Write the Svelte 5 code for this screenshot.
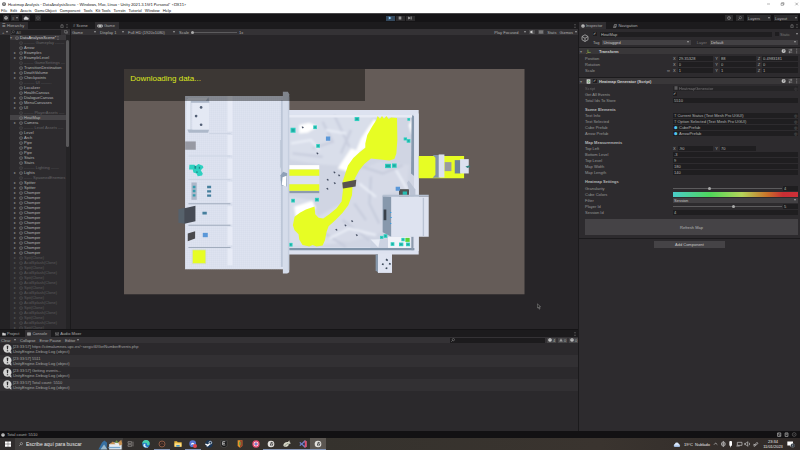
<script>
  const menus = ['File', 'Edit', 'Assets', 'GameObject', 'Component', 'Tools', 'Kit Tools', 'Terrain', 'Tutorial', 'Window', 'Help'];

  const row = (name, fold = false, dim = false) => ({ name, fold, dim });
  const sep = (name) => ({ name, fold: false, dim: true, sep: true });
  const nodes = [
    sep('-------- Gameplay -------'),
    row('Arrow'), row('Examples', true), row('ExampleLevel', true),
    sep('------- GameSettings ---'),
    row('TransitionDestination'), row('DeathVolume', true), row('Checkpoints', true),
    sep('-------- UI --------'),
    row('Localizer'), row('HealthCanvas'), row('DialogueCanvas', true), row('MenuCanvases', true), row('UI', true),
    sep('------- PlayerAssets ----'),
    row('HeatMap'), row('Camera', true),
    sep('------- Level Assets ----'),
    row('Level'), row('Arch'), row('Pipe'), row('Pipe'), row('Pipe'), row('Stairs'), row('Stairs'),
    sep('-------- Lighting ------'),
    row('Lights', true),
    sep('------ SpawnedEnemies'),
    row('Spitter', true), row('Spitter', true),
    ...Array.from({ length: 13 }, () => row('Chomper', true)),
    ...Array.from({ length: 15 }, (_, i) => row(i % 2 ? 'AcidSplash(Clone)' : 'Spit(Clone)', true, true))
  ];

  const transform = [
    { label: 'Position', v: ['29.35328', '88', '0.4983181'] },
    { label: 'Rotation', v: ['0', '0', '0'] },
    { label: 'Scale', v: ['1', '1', '1'] }
  ];
  const axes = ['X', 'Y', 'Z'];
  const refs = [
    { label: 'Text Info', value: 'Current Status (Text Mesh Pro UGUI)', prefab: false },
    { label: 'Text Selected', value: 'Option Selected (Text Mesh Pro UGUI)', prefab: false },
    { label: 'Cube Prefab', value: 'CubePrefab', prefab: true },
    { label: 'Arrow Prefab', value: 'ArrowPrefab', prefab: true }
  ];
  const measures = [
    { label: 'Bottom Level', value: '-3' },
    { label: 'Top Level', value: '9' },
    { label: 'Map Width', value: '180' },
    { label: 'Map Length', value: '140' }
  ];
  const logs = ['https://citmalumnes.upc.es/~sergicf4/GetNumberEvents.php', '5511', 'Getting events...', 'Total count: 5510'];

  const teal = [[34, 113, 15, 15], [102, 106, 11, 11], [226, 81, 14, 12], [111, 162, 11, 11], [384, 84, 8, 8], [373, 142, 10, 9], [382, 147, 11, 11], [317, 221, 18, 13], [338, 220, 14, 13], [36, 326, 11, 11], [107, 323, 12, 11], [29, 458, 11, 11], [302, 437, 10, 9], [313, 432, 11, 11], [334, 456, 11, 11], [359, 457, 13, 11], [380, 457, 12, 11], [366, 443, 10, 10]];
  const dots = [[70, 112], [114, 190], [165, 247], [179, 256], [145, 269], [166, 279], [144, 296], [218, 393], [198, 406], [171, 419], [232, 435]];
  const sideDots = [[246, 142], [231, 168], [246, 194]];
  const apps = ['task', 'edge', 'ring', 'folder', 'chat', 'steam', 'epic', 'shield', 'flower', 'unity', 'bird', 'vs', 'unity'];
  const openApps = [2, 4, 9, 10, 11, 12];
</script>

{#snippet cube()}
  <svg class="ico" viewBox="0 0 16 16"><path d="M8 1.500 14 5v6.500L8 15l-6-3.500V5zM2 5l6 3.500L14 5M8 8.500V15" fill="none" stroke="currentColor" stroke-width="1.600" /></svg>
{/snippet}
{#snippet arrow()}
  <svg class="arrow" viewBox="0 0 6 6"><path d="M0 1h6L3 5z" fill="currentColor" /></svg>
{/snippet}
{#snippet dotsIcon()}
  <svg class="dots" viewBox="0 0 4 12"><path d="M1 1h2v2H1zM1 5h2v2H1zM1 9h2v2H1z" fill="currentColor" /></svg>
{/snippet}
{#snippet glass()}
  <svg class="ico" viewBox="0 0 16 16"><circle cx="9.500" cy="6.500" r="4.500" fill="none" stroke="currentColor" stroke-width="1.600" /><path d="m6 10-5 5" stroke="currentColor" stroke-width="1.800" /></svg>
{/snippet}
{#snippet headTools()}
  <svg class="tools" viewBox="0 0 48 16"><circle cx="7" cy="8" r="5.500" fill="#c4c4c4" /><path d="M5.500 6.500q2-2 3 0L7 8v2" fill="none" stroke="#333" stroke-width="1.500" /><path d="M20 5h10M20 11h10M27 2v6M23 8v6" stroke="#b0b0b0" stroke-width="1.500" /><path d="M41 2h2v2h-2zM41 7h2v2h-2zM41 12h2v2h-2z" fill="#b0b0b0" /></svg>
{/snippet}
{#snippet bubble()}
  <svg class="bubble" viewBox="0 0 27 30"><circle cx="13" cy="13.500" r="12.500" fill="#d4d4d4" /><path d="M15 22h10v7z" fill="#d4d4d4" /><path d="M11 5h5l-1 11h-3zM11.500 18.500h4v3.500h-4z" fill="#2b2a2c" /></svg>
{/snippet}
{#snippet appIcon(kind)}
  <svg class="app-ico" viewBox="0 0 24 24">
    {#if kind === 'task'}
      <path d="M3 5h11v5H3zM3 14h11v5H3zM18 5v14" fill="none" stroke="#9a9692" stroke-width="2" />
    {:else if kind === 'edge'}
      <circle cx="12" cy="12" r="11" fill="#1b74c9" /><path d="M1 11a11 11 0 0 1 22 0c0 6-8 6-8 3 2-5-7-8-14-3z" fill="#48cfae" /><path d="M11 12c-4 4 1 11 9 8-4 5-17 3-16-5 1-4 6-5 7-3z" fill="#d9edf5" />
    {:else if kind === 'ring'}
      <circle cx="12" cy="12" r="9" fill="#302522" stroke="#8b5a45" stroke-width="3" /><path d="m7 15 5-7 5 7" fill="none" stroke="#6e4535" stroke-width="2" />
    {:else if kind === 'folder'}
      <path d="M1 4h8l2 3h12v13H1z" fill="#e8b83d" /><path d="M2 10h20v10H2z" fill="#ffdf87" /><path d="M7 15h10v5H7z" fill="#4293c8" />
    {:else if kind === 'chat'}
      <circle cx="11" cy="11" r="10" fill="#5877d6" /><path d="M6 15c0-9 10-9 10 0l-3-2H9z" fill="#fff" /><circle cx="18" cy="18" r="6" fill="#df4650" />
    {:else if kind === 'steam'}
      <circle cx="12" cy="12" r="11" fill="#1a3554" /><circle cx="16" cy="8" r="4" fill="none" stroke="#fff" stroke-width="2" /><path d="m1 12 8 4 5-5M9 16l-4 3" fill="none" stroke="#fff" stroke-width="4" />
    {:else if kind === 'epic'}
      <path d="M3 1h18v18l-9 4-9-4z" fill="#171717" stroke="#777" /><path d="M8 5h8M8 5v10M8 10h7M8 15h8" stroke="#eee" stroke-width="2" />
    {:else if kind === 'shield'}
      <path d="M5 1h14v17l-7 5-7-5z" fill="#e8932b" /><path d="M12 1h7v17l-7 5z" fill="#9b442b" /><path d="M9 5h5v11H9z" fill="#72a143" />
    {:else if kind === 'flower'}
      <circle cx="12" cy="12" r="11" fill="#e5496d" /><path d="M12 4v16M4 12h16M6 6l12 12M18 6 6 18" stroke="#ecd8ef" stroke-width="3" /><circle cx="12" cy="12" r="3" fill="#496bcb" />
    {:else if kind === 'unity'}
      <circle cx="12" cy="12" r="10" fill="#e2e0dc" /><path d="m14 5 5 4-1 7-5 3-4-3v-7z" fill="#555" /><path d="m9 9 5 3 5-3M14 12l-1 7" fill="none" stroke="#e2e0dc" stroke-width="1.500" />
    {:else if kind === 'bird'}
      <path d="M1 17C1 9 8 5 15 6l4-5 1 6 4 3-6 2c-1 8-11 12-17 5z" fill="#d8d8c9" /><path d="m4 19 8-8 7 2" fill="none" stroke="#687660" stroke-width="2" />
    {:else}
      <path d="m17 1 6 3v16l-6 3L8 14l-4 4-3-2 4-4-4-4 3-2 4 4z" fill="#6f7fc8" /><path d="m17 1 6 3v16l-6 3z" fill="#e04c66" /><path d="m17 7-6 5 6 5z" fill="#28243a" />
    {/if}
  </svg>
{/snippet}

<div class="editor">
  <header class="window-head">
    <div class="title">
      <svg class="logo" viewBox="0 0 16 16"><circle cx="8" cy="8" r="7.500" fill="#333" /><path d="m8 3 4 2.500v5L8 13l-4-2.500v-5zM4 5.500 8 8l4-2.500M8 8v5" fill="none" stroke="#fff" stroke-width="1.500" /></svg>
      <span>Heatmap Analysis - DataAnalysisScene - Windows, Mac, Linux - Unity 2021.3.15f1 Personal* &lt;DX11&gt;</span>
      <svg class="win-controls" viewBox="0 0 102 12"><path d="M3 6h9M45 4h7v6h-7zM47 4V2h7v6h-2M88 2l8 8M96 2l-8 8" fill="none" stroke="#555" stroke-width="1.300" /></svg>
    </div>
    <nav class="menu">
      {#each menus as m}<button>{m}</button>{/each}
    </nav>
  </header>

  <div class="toolbar">
    <div class="tool-left">
      <button class="chip round" aria-label="Account"><svg class="ico" viewBox="0 0 16 16"><circle cx="8" cy="8" r="7" fill="#ccc" /><circle cx="8" cy="6" r="2.500" fill="#333" /><path d="M3.500 13q4.500-6 9 0" fill="#333" /></svg></button>
      <button class="chip">≡ {@render arrow()}</button>
      <button class="chip cloud-chip" aria-label="Cloud"><svg class="ico wide" viewBox="0 0 20 14"><path d="M4 13a4 4 0 0 1 0-7 6 6 0 0 1 11-1 4 4 0 0 1 1 8z" fill="#d0d0d0" /></svg></button>
      <button class="chip faint" aria-label="Packages">{@render cube()}</button>
    </div>
    <div class="play">
      <button class="on" aria-label="Play"><svg class="ico" viewBox="0 0 16 16"><path d="m3 2 11 6-11 6z" fill="#8fd0ff" /></svg></button>
      <button aria-label="Pause"><svg class="ico" viewBox="0 0 16 16"><path d="M3 2h4v12H3zM9 2h4v12H9z" fill="#b8b8b8" /></svg></button>
      <button aria-label="Step"><svg class="ico" viewBox="0 0 16 16"><path d="m1 2 9 6-9 6zM11 2h3v12h-3z" fill="#b8b8b8" /></svg></button>
    </div>
    <div class="tool-right">
      <button class="chip icon-chip" aria-label="History"><svg class="ico" viewBox="0 0 16 16"><circle cx="8" cy="8" r="6" fill="none" stroke="#aaa" stroke-width="2" /><path d="M8 4v4h3" stroke="#aaa" fill="none" stroke-width="1.500" /></svg></button>
      <button class="chip icon-chip" aria-label="Search">{@render glass()}</button>
      <button class="chip drop"><span>Layers</span>{@render arrow()}</button>
      <button class="chip drop"><span>Layout</span>{@render arrow()}</button>
    </div>
  </div>

  <main>
    <div class="left">
      <div class="upper">
        <section class="hierarchy">
          <div class="tabs"><button class="tab active">☰ Hierarchy</button><span class="grow"></span><svg class="ico" viewBox="0 0 16 16"><path d="M4 7V5a4 4 0 0 1 8 0v2M3 7h10v7H3z" fill="none" stroke="#999" stroke-width="1.600" /></svg>{@render dotsIcon()}</div>
          <div class="bar hbar">
            <button>+ {@render arrow()}</button>
            <label class="search">{@render glass()}<input aria-label="Search hierarchy" value="All" /></label>
            <svg class="ico" viewBox="0 0 16 16"><path d="M2 2h9v9H2zM5 13h9V5" fill="none" stroke="#999" stroke-width="1.600" /></svg>
          </div>
          <div class="tree-wrap">
            <div class="tree">
              <div class="node scene-root"><i class="fold">▾</i>{@render cube()}<span>DataAnalysisScene*</span>{@render dotsIcon()}</div>
              {#each nodes as n}
                <div class="node" class:dim={n.dim} class:sep={n.sep} class:selected={n.name === 'HeatMap'}>
                  <i class="fold">{n.fold ? '▸' : ''}</i>{@render cube()}<span>{n.name}</span>
                </div>
              {/each}
            </div>
            <div class="scroll"><div class="thumb"></div></div>
          </div>
        </section>

        <section class="game">
          <div class="tabs">
            <button class="tab scene-tab"># Scene</button>
            <button class="tab active"><svg class="ico wide" viewBox="0 0 20 14"><rect y="2" width="20" height="10" rx="5" fill="#bbb" /><circle cx="5" cy="7" r="2" fill="#333" /><circle cx="15" cy="7" r="2" fill="#333" /></svg>Game</button>
            <span class="grow"></span>{@render dotsIcon()}
          </div>
          <div class="bar gbar">
            <button class="w24"><span>Game</span>{@render arrow()}</button>
            <button class="w24"><span>Display 1</span>{@render arrow()}</button>
            <button class="w48"><span>Full HD (1920x1080)</span>{@render arrow()}</button>
            <label class="scale">Scale<input type="range" min="1" max="5" value="1" />1x</label>
            <span class="grow"></span>
            <div class="gtools">
              <button class="focus"><span>Play Focused</span>{@render arrow()}</button>
              <button class="lit" aria-label="Mute"><svg class="ico" viewBox="0 0 16 16"><path d="M2 5h3l4-3v12l-4-3H2zM11 10l4 4" fill="#ddd" stroke="#ddd" /></svg></button>
              <button class="lit" aria-label="Shortcuts"><svg class="ico" viewBox="0 0 16 16"><path d="M1 3h14v10H1zM4 3v10M8 3v10M12 3v10M1 8h14" fill="none" stroke="#ccc" /></svg></button>
              <button>Stats</button>
              <button><span>Gizmos</span>{@render arrow()}</button>
            </div>
          </div>
          <div class="stage">
            <div class="render">
              <svg class="map" viewBox="125 69 400 225">
                <defs>
                  <pattern id="tiles" width="6" height="6" patternUnits="userSpaceOnUse"><path d="M0 0h6M0 0v6" stroke="#d0d6e6" stroke-width="1" /></pattern>
                  <filter id="soft"><feGaussianBlur stdDeviation="3" /></filter>
                  <clipPath id="ground"><path d="M29 70h376v405H29z" /></clipPath>
                </defs>
                <rect x="125" y="69" width="400" height="225" fill="#655c58" />

                <g transform="translate(280 90) scale(.33333)">
                  <path d="M20 60h398v433H20z" fill="#dde2f0" />
                  <path d="M26 74h378v398H26z" fill="#d0d5e3" />
                  <g clip-path="url(#ground)">
                    <g filter="url(#soft)">
                      <path d="M30 78h250l-30 90-60 60-65-5-95-15zM30 320l70 10 15 50 70-40-10 120-145 10z" fill="#d9deea" />
                      <path d="m240 240 60-25 90 10-10 70-70 20v110l-100 30-90-10 20-50 70-60z" fill="#d6dae7" />
                      <path d="m130 95 30 60-60 20M165 75l45 95M215 120l-30 70M40 190l90 10M250 230l60 20 60-25M275 260l-5 80 30 60M130 425l70 45M190 390l80 60M225 340l35 50" fill="none" stroke="#c2c8d8" stroke-width="7" opacity=".7" />
                      <path d="m35 160 60-10 25 30M140 120l60 10M350 240l35 60M150 445l60-30 80 20M240 280l50 40" fill="none" stroke="#e9edf6" stroke-width="7" />
                      <path d="m60 105 30-7 25 12-30 18-25 2zM245 145l40-60 20 30-45 60-35 20zM388 105l12-20-4 50zM45 350l55-18 10 22-60 30zM175 235l40-60 30 10-40 60z" fill="#fff" />
                    </g>
                  </g>
                  <path d="M397 75l10 5v180l-12-10z" fill="#8799ae" /><path d="M404 70h14v412h-14z" fill="#dfe4f1" />
                  <path d="M28 473h377v7H28z" fill="#8194a9" /><path d="M28 74h370v8H28z" fill="#e8ebf5" />
                  <path d="M29 225h91v13H29z" fill="#fff" /><path d="M29 257h91v26H29z" fill="#dde2ee" /><path d="M29 302h91v7H29z" fill="#8d9bae" />
                  <path d="M29 238h91v19H29zM29 282h91v20H29z" fill="#e7fd24" />
                  <path d="M106 349 108 372 118 383 132 385 150 372 172 354 187 334 191 300 190 275 198 250 206 226 222 204 240 187 258 173 258 160 264 135 278 110 291 90 295 78 302 86 308 78 314 86 321 78 328 87 335 82 353 84 354 150 351 190 345 207 330 211 275 205 255 222 240 240 228 262 220 285 218 315 207 345 190 368 168 390 148 408 142 425 137 450 130 466 112 469 100 464 90 469 70 464 60 448 58 432 46 420 41 405 46 380 62 368 80 358z" fill="#e7fd24" />
                  <path d="m189 277 42-8-2 20-38 6z" fill="#58534f" />
                  <path d="M418 198h136v66H418z" fill="#e7fd24" />
                  <path d="m460 195 8 8v51l-8 9h22v-68z" fill="#8394a8" /><path d="M478 193h17v69h-17z" fill="#dce1ef" />
                  <path d="M496 216h20v27h-20z" fill="#9a9aa0" /><path d="M526 210h18v40h-18z" fill="#6d8299" /><path d="M542 207h26v43h-26z" fill="#dce1ef" />
                  <path d="m558 229 10-3 5 4-9 4z" fill="#31827f" />
                  <path d="M359 297h30v22h-30z" fill="#525454" /><path d="M370 304h13v10h-13z" fill="#25bdb2" />
                  <path d="m383 278 5-7 20 27v17l-14 5z" fill="#bbc3d4" />
                  <path d="M310 317l26 3v120l-26-14z" fill="#8798ac" /><path d="M336 320h112v120H336z" fill="#dee3f0" /><path d="M310 314h138v6H310z" fill="#b4bfd0" /><path d="M430 323h4v115h-4z" fill="#bac3d4" />
                  <path d="M313 358h8v32h-8z" fill="#39404a" /><path d="M332 367h4M333 382h4M332 400h4" stroke="#389ce0" stroke-width="3" />
                  <path d="M275 448h50l3 25h-55z" fill="#ccd3e2" /><path d="M326 440h68v33h-68z" fill="#f1f3f9" /><path d="M396 440h6v40h-6z" fill="#8d9bae" />
                  <path d="M289 492l9 2v55l-9-9z" fill="#8798ac" /><path d="M296 490h42v58h-42z" fill="#dfe4f1" />
                  <path d="m274 448 28-1-5 25z" fill="#e9edf6" />
                  {#each teal as [x, y, w, h]}<rect {x} {y} width={w} height={h} fill="#2fd0c0" /><rect x={x + 3} y={y + 3} width={w - 6} height={h - 6} fill="#20a9a1" />{/each}
                  <path d="M140 139h13v13h-13zM349 290h13v12h-13z" fill="#5a97d8" /><path d="M378 443h13v12h-13z" fill="#58d335" />
                  {#each dots as [x, y]}<path d="M{x - 3} {y - 2}l4-1 3 4-4 2z" fill="#475064" />{/each}
                  <path d="m320 507 5 4M308 521l5 2M329 520l5 2M319 533l5 2" stroke="#3d4a5b" stroke-width="5" />
                </g>

                <g transform="translate(120 60) scale(.33333)">
                  <path d="M198 108h296v519H198z" fill="#dee3f0" /><path d="M198 108h296v519H198z" fill="url(#tiles)" />
                  <path d="M325 108h15v106h-15zM325 225h15v60h-15zM325 295h15v60h-15zM325 365h15v62h-15zM325 438h15v55h-15zM325 500h15v55h-15zM325 565h15v50h-15z" fill="#e7ebf6" />
                  <path d="M208 431h126M208 495h126M208 562h126" stroke="#a1acbd" stroke-width="3" /><path d="M270 220h65M208 288h126M208 358h126" stroke="#ced5e4" stroke-width="3" />
                  <path d="M203 112h65l3 16h-55v80h54l-3 10h-58l-4-10z" fill="#aeb9ca" /><path d="M203 112h65l-8 10h-50zM203 116h12v92h-12zM220 129h50v79h-50z" fill="#e4e9f4" />
                  {#each sideDots as [x, y]}<circle cx={x} cy={y} r="4" fill="#536076" />{/each}
                  <path d="M198 244h32v25h-32z" fill="#9799a3" />
                  <path d="M211 314h15l4 4 8-6 13 5 2 5-8 8 6 10-2 6-13 2-4-8-9-3-2-9h-11z" fill="#2fd0c0" /><path d="M226 318h5v8h-5zM239 320h4v6h-4zM231 334h5v4h-5z" fill="#198b8b" />
                  <path d="M217 367h16v52h-16z" fill="#adb7c9" /><path d="M221 377h8v7h-8zM221 389h8v7h-8zM221 402h8v7h-8z" fill="#369cae" />
                  <path d="M264 377h12v7h-12zM264 390h12v7h-12zM264 403h12v7h-12zM250 455h13v8h-13z" fill="#467f9d" />
                  <path d="m178 447 20-4v48l-20-3z" fill="#56616b" /><path d="m196 444 33-7v46l-33 8z" fill="#464b55" /><path d="m206 520 22-7v22l-22 8z" fill="#4a4a4e" />
                  <path d="M251 518h15v13h-15z" fill="#5a97d8" /><path d="M220 569h40v41h-40z" fill="#e7fd24" stroke="#cfd9d2" stroke-width="2" />
                  <path d="m473 295 14 35-4 30 5 10V240h-5v80z" fill="#bcc6d6" />
                  <path d="M485 120h6v500h-6z" fill="#bcc6d7" /><path d="M491 95h15l4 8v533l-6 4h-13z" fill="#d5dcea" /><path d="M506 110h4v520h-4z" fill="#c6cfdf" />
                  <path d="m484 345 8-10 12 4-2 40-15-3z" fill="#8fa1b7" /><path d="m490 351 12-4-2 33-12-6z" fill="#fff" />
                </g>
              </svg>
              <p class="status-text">Downloading data...</p>
            </div>
            <svg class="cursor" viewBox="0 0 12 18"><path d="M1 1v13l3-3 2.500 6 2.500-1-2.500-6H11z" fill="#222" stroke="#aaa" stroke-width="1.300" /></svg>
          </div>
        </section>
      </div>

      <section class="console">
        <div class="tabs">
          <button class="tab"><svg class="ico" viewBox="0 0 16 16"><path d="M1 3h6l2 2h6v9H1z" fill="#ccc" /></svg>Project</button>
          <button class="tab active"><svg class="ico" viewBox="0 0 16 16"><path d="M1 2h14v12H1z" fill="#bbb" /><path d="M3 5h10M3 8h10M3 11h10" stroke="#444" /></svg>Console</button>
          <button class="tab"><svg class="ico" viewBox="0 0 16 16"><path d="M3 1v14M8 1v14M13 1v14M1 5h4M6 10h4M11 4h4" stroke="#bbb" stroke-width="1.500" /></svg>Audio Mixer</button>
          <span class="grow"></span>{@render dotsIcon()}
        </div>
        <div class="bar cbar">
          <button class="clear"><span>Clear</span>{@render arrow()}</button><button>Collapse</button><button>Error Pause</button><button>Editor {@render arrow()}</button>
          <span class="grow"></span>
          <label class="find">{@render glass()}<input aria-label="Search log" /></label>
          <button class="count"><svg class="ico" viewBox="0 0 16 16"><circle cx="8" cy="8" r="7" fill="#ddd" /><path d="M7 4h2v5H7zM7 11h2v2H7z" fill="#333" /></svg>4</button>
          <button class="count"><svg class="ico" viewBox="0 0 16 16"><path d="m8 1 7 13H1z" fill="#999" /></svg>0</button>
          <button class="count"><svg class="ico" viewBox="0 0 16 16"><circle cx="8" cy="8" r="7" fill="#ccc" /><path d="M7 4h2v5H7zM7 11h2v2H7z" fill="#333" /></svg>0</button>
        </div>
        <div class="logs">
          {#each logs as l}
            <div class="log">{@render bubble()}<div><p>[23:33:57] {l}</p><p>UnityEngine.Debug:Log (object)</p></div></div>
          {/each}
        </div>
      </section>
    </div>

    <section class="inspector">
      <div class="tabs">
        <button class="tab active"><svg class="ico" viewBox="0 0 16 16"><circle cx="8" cy="8" r="7" fill="#ccc" /><path d="M7 3h2v2H7zM7 7h2v6H7z" fill="#333" /></svg>Inspector</button>
        <button class="tab nav"><svg class="ico" viewBox="0 0 16 16"><path d="M2 14 6 2h8l-3 12zM5 9h8" fill="none" stroke="#bbb" stroke-width="2" /></svg>Navigation</button>
        <span class="grow"></span><svg class="ico" viewBox="0 0 16 16"><path d="M4 7V5a4 4 0 0 1 8 0v2M3 7h10v7H3z" fill="none" stroke="#999" stroke-width="1.600" /></svg>{@render dotsIcon()}
      </div>

      <div class="object">
        <div class="big-cube">{@render cube()}</div>
        <div class="object-rows">
          <div class="object-row">
            <input type="checkbox" checked aria-label="Active" /><input class="field grow" aria-label="Name" value="HeatMap" />
            <label class="static"><input type="checkbox" />Static</label>{@render arrow()}
          </div>
          <div class="object-row">
            <label for="tag">Tag</label><span class="pick grow"><select id="tag"><option>Untagged</option></select>{@render arrow()}</span>
            <label for="layer" class="layer">Layer</label><span class="pick grow"><select id="layer"><option>Default</option></select>{@render arrow()}</span>
          </div>
        </div>
      </div>

      <div class="comp-head"><i class="fold">▾</i><svg class="ico big" viewBox="0 0 16 16"><path d="M6 2v9h9" fill="none" stroke="#8bc34a" stroke-width="2" /><path d="m6 11-4 4" stroke="#e0b040" stroke-width="2" /></svg><b class="indent">Transform</b><span class="grow"></span>{@render headTools()}</div>
      <div class="props first">
        {#each transform as t}
          <div class="prop"><span class="name">{t.label}</span>
            <div class="axes">
              {#if t.label === 'Scale'}<span class="link">∞</span>{/if}
              {#each t.v as v, i}<label>{axes[i]}<input class="field" value={v} /></label>{/each}
            </div>
          </div>
        {/each}
      </div>

      <div class="comp-head"><i class="fold">▾</i><svg class="ico big" viewBox="0 0 16 16"><path d="M2 1h12v14H2z" fill="#ddd" /><path d="M10 5H6v6h4M8 7h5M8 9h5" fill="none" stroke="#4a8a4a" stroke-width="1.500" /></svg><input type="checkbox" checked aria-label="Enabled" /><b>Heatmap Generator (Script)</b><span class="grow"></span>{@render headTools()}</div>
      <div class="props">
        <div class="prop off"><span class="name">Script</span><div class="field obj"><svg class="ico" viewBox="0 0 16 16"><path d="M2 1h12v14H2z" fill="#888" /></svg>HeatmapGenerator<span class="grow"></span><span class="target">◎</span></div></div>
        <div class="prop"><label class="name" for="all">Get All Events</label><input id="all" type="checkbox" checked /></div>
        <div class="prop"><label class="name" for="total">Total Ids To Store</label><input id="total" class="field" value="5510" /></div>
        <h3>Scene Elements</h3>
        {#each refs as r}
          <div class="prop"><span class="name">{r.label}</span><div class="field obj"><span class="prefab" class:text={!r.prefab}>{r.prefab ? '⬢' : 'T'}</span>{r.value}<span class="grow"></span><span class="target">◎</span></div></div>
        {/each}
        <h3>Map Measurements</h3>
        <div class="prop"><span class="name">Top Left</span><div class="axes"><label>X<input class="field" value="-90" /></label><label>Y<input class="field" value="70" /></label><span></span></div></div>
        {#each measures as m}
          <div class="prop"><label class="name" for={m.label}>{m.label}</label><input id={m.label} class="field" value={m.value} /></div>
        {/each}
        <h3 class="last">Heatmap Settings</h3>
        <div class="prop"><label class="name" for="gran">Granularity</label><div class="slide"><input id="gran" type="range" min="1" max="10" value="4" /><input class="field" aria-label="Granularity value" value="4" /></div></div>
        <div class="prop"><span class="name">Cube Colors</span><div class="gradient"></div></div>
        <div class="prop"><label class="name" for="filter">Filter</label><span class="pick"><select id="filter"><option>Session</option></select>{@render arrow()}</span></div>
        <div class="prop"><label class="name" for="player">Player Id</label><div class="slide"><input id="player" type="range" min="0" max="9" value="5" /><input class="field" aria-label="Player value" value="5" /></div></div>
        <div class="prop"><label class="name" for="session">Session Id</label><input id="session" class="field" value="4" /></div>
        <button class="refresh">Refresh Map</button>
      </div>
      <div class="add"><button>Add Component</button></div>
    </section>
  </main>

  <div class="status">
    <svg class="ico" viewBox="0 0 16 16"><circle cx="8" cy="8" r="7" fill="#ddd" /><path d="M7 3h2v6H7zM7 11h2v2H7z" fill="#222" /></svg><span>Total count: 5510</span><span class="grow"></span>
    <svg class="status-icons" viewBox="0 0 66 16"><path d="M3 3h10v11H3zM4 4l8 9M27 3h9v11h-9zM29 7h5" fill="none" stroke="#aaa" stroke-width="2.500" /><circle cx="56" cy="8" r="6" fill="none" stroke="#888" stroke-width="1.500" /><path d="m53 8 2 2 4-4" fill="none" stroke="#888" /></svg>
  </div>

  <footer class="taskbar">
    <button class="start" aria-label="Start"><svg viewBox="0 0 16 16"><path d="M0 1h7.500v6.500H0zM8.500 1H16v6.500H8.500zM0 8.500h7.500V15H0zM8.500 8.500H16V15H8.500z" fill="#fff" /></svg></button>
    <label class="winsearch">{@render glass()}<input aria-label="Windows search" value="Escribe aquí para buscar" />
      <svg class="mascot" viewBox="0 0 74 32"><path d="M1 31 12 10l7-6 8 7-2 18z" fill="#376fa0" /><path d="m7 31 11-15 10 15z" fill="#9ab7c9" /><path d="M33 31V15l12-5h20l5 7v14z" fill="#e6edf2" /><path d="m34 15 10-8 8 8zM60 10l9-8 3 13-8 5z" fill="#c89253" /><path d="m50 9 6-6 4 9z" fill="#6d963b" /><path d="M31 23h35v4H31z" fill="#78a8ce" /></svg>
    </label>
    <div class="apps">
      {#each apps as a, i}<button class:open={openApps.includes(i)} class:current={i === 12} aria-label={a}>{@render appIcon(a)}</button>{/each}
    </div>
    <span class="grow"></span>
    <div class="tray">
      <svg class="cloud" viewBox="0 0 24 16"><path d="M5 15a5 5 0 0 1 0-9 7 7 0 0 1 13 0 5 5 0 0 1 1 9z" fill="#d9e7fa" /><path d="M5 15c-3-1-4-3-4-4h21c0 2-1 4-3 4z" fill="#9dbbe5" /></svg>
      <span class="weather">19°C&nbsp; Nublado</span>
      <svg class="tray-icons" viewBox="0 0 138 24"><g fill="none" stroke="#ccc" stroke-width="2"><path d="m3 14 5-5 5 5" /><circle cx="31" cy="12" r="6" /><path d="M31 3v18M26 12h10M73 7h14v9H73zM70 18h10" /><path d="M95 10h4l5-5v14l-5-5h-4zM108 8q4 4 0 8" /><path d="m122 18 10-11 3 3-10 9zM121 13l7 1" /></g><rect x="49" y="3" width="8" height="15" rx="3" fill="#fff" /><path d="M52 18h2v4h-2z" fill="#fff" /></svg>
      <div class="clock"><span>23:34</span><span>11/01/2023</span></div>
      <svg class="note" viewBox="0 0 24 20"><path d="M1 1h17v12h-5l-4 4v-4H1z" fill="#fff" /><circle cx="17" cy="13" r="6" fill="#26303a" stroke="#aaa" /><path d="M17 10v6" stroke="#fff" stroke-width="1.500" /></svg>
    </div>
  </footer>
</div>

<style>
  :global(body) { margin: 0; background: #2b292c; }
  .editor { --text: #adadad; --field: #1f1e20; --panel: #2d2b2e; display: flex; flex-direction: column; height: 100vh; overflow: hidden; font: 4px/5px "Liberation Sans", Arial, sans-serif; color: var(--text); background: #1b1a1c; }
  .editor * { box-sizing: border-box; }
  button, input, select { font: inherit; color: inherit; background: none; border: 0; margin: 0; padding: 0; border-radius: 0; min-width: 0; outline: 0; }
  button { display: flex; align-items: center; gap: 2px; white-space: nowrap; }
  select { appearance: none; width: 100%; height: 5px; }
  p, h3 { margin: 0; font: inherit; }
  svg { display: block; flex: none; }
  span { white-space: nowrap; }
  .grow { flex: 1; }
  .ico { width: 4px; height: 4px; }
  .ico.wide { width: 6px; }
  .ico.big { width: 5px; height: 5px; }
  .arrow { width: 2px; height: 2px; color: #c0c0c0; }
  .dots { width: 2px; height: 4px; color: #aaa; }
  .fold { flex: 0 0 4px; font-style: normal; color: #888; }

  .window-head { flex: none; height: 13px; background: #fff; color: #222; padding: 1px 0 0 1px; font-family: Lato, "Liberation Sans", sans-serif; }
  .title { display: flex; align-items: center; gap: 2px; height: 6px; padding-left: 1px; }
  .title span { flex: 1; }
  .logo { width: 4px; height: 4px; }
  .win-controls { width: 34px; height: 4px; }
  .menu { display: flex; gap: 3px; height: 6px; }

  .toolbar { flex: none; display: grid; grid-template-columns: 1fr auto 1fr; align-items: center; height: 9px; border-top: 1px solid #49484a; background: #151416; }
  .tool-left, .tool-right, .play { display: flex; align-items: center; gap: 2px; }
  .tool-left { padding-left: 3px; }
  .tool-right { justify-content: flex-end; padding-right: 2px; gap: 3px; }
  .chip { height: 6px; padding: 0 1px; background: #2c2b2d; }
  .icon-chip { padding: 0 2px; }
  .cloud-chip { margin-left: 1px; }
  .chip.faint { color: #666; margin-left: 3px; }
  .drop { width: 24px; justify-content: space-between; }
  .play { gap: 1px; }
  .play button { width: 9px; height: 5px; justify-content: center; background: #2c2b2d; }
  .play .on { background: #34495e; }

  main { flex: 1; min-height: 0; display: grid; grid-template-columns: minmax(0, 1fr) 221px; gap: 1px; }
  .left { display: flex; flex-direction: column; min-height: 0; }
  .upper { flex: 1; min-height: 0; display: grid; grid-template-columns: 70px minmax(0, 1fr); gap: 1px; }
  .tabs { display: flex; flex: none; align-items: center; height: 7px; background: #1c1b1d; gap: 2px; padding-right: 2px; }
  .tab { height: 7px; padding: 0 4px 0 2px; gap: 1px; }
  .tab.active { background: #302e31; }
  .scene-tab { width: 22px; }
  .nav { margin-left: 3px; }
  .bar { display: flex; flex: none; align-items: center; height: 6px; background: #343235; }
  .hierarchy, .game { display: flex; flex-direction: column; min-height: 0; min-width: 0; }
  .hbar { gap: 3px; padding: 0 2px; }
  .search { display: flex; flex: 1; align-items: center; gap: 1px; background: #242325; height: 5px; min-width: 0; color: #777; }
  .search input { width: 100%; }
  .tree-wrap { display: flex; flex: 1; min-height: 0; background: var(--panel); }
  .tree { flex: 1; min-width: 0; overflow: hidden; border-left: 10px solid #232224; }
  .node { display: flex; align-items: center; height: 5px; gap: 1px; padding-left: 4px; color: #b4b4b4; }
  .node .ico { color: #8a8a8a; }
  .scene-root { background: #3b393c; padding-left: 0; color: #d0d0d0; }
  .dim { color: #5c5b5d; }
  .dim .ico, .dim .fold { color: #555; }
  .sep { color: #656466; }
  .selected { background: #454346; }
  .scroll { width: 4px; background: #252426; padding: 5px 1px 0 0; }
  .thumb { height: 37%; border-radius: 2px; background: #59585a; }

  .gbar { gap: 4px; padding: 0 1px; }
  .gbar button { justify-content: space-between; }
  .w24 { width: 24px; }
  .w48 { width: 47px; }
  .gtools { display: flex; align-items: center; gap: 3px; }
  .focus { width: 32px; }
  .lit { background: #4a494b; padding: 0 1px; }
  .scale { display: flex; align-items: center; gap: 2px; }
  .scale input { width: 46px; }
  input[type='range'] { appearance: none; height: 4px; background: linear-gradient(#5c5b5d, #5c5b5d) center / 100% 1px no-repeat; }
  input[type='range']::-webkit-slider-thumb { appearance: none; width: 3px; height: 3px; border-radius: 50%; background: #aaa; }
  .stage { position: relative; flex: 1; min-height: 0; display: flex; align-items: center; justify-content: center; background: #272528; }
  .render { position: relative; width: 79%; }
  .map { width: 100%; height: auto; }
  .status-text { position: absolute; top: 0; left: 0; width: 60%; height: 14%; padding: 5px 6px; background: rgba(0, 0, 0, 0.4); color: #dce81e; font-size: 8px; line-height: 10px; }
  .cursor { position: absolute; left: 92%; top: 91%; width: 4px; height: 7px; }

  .console { flex: none; height: 102px; background: #2b292c; border-top: 1px solid #151416; }
  .cbar { gap: 4px; padding-left: 1px; }
  .clear { width: 15px; justify-content: space-between; }
  .find { display: flex; align-items: center; width: 95px; height: 5px; padding-left: 1px; background: #1c1b1d; }
  .find + .count { margin-left: -2px; }
  .count { background: #464547; width: 9px; height: 5px; gap: 1px; padding: 0 1px; }
  .count + .count { margin-left: -2px; }
  .log { display: flex; align-items: center; gap: 1px; height: 12px; padding-left: 3px; white-space: nowrap; color: #a2a2a2; }
  .log:nth-child(even) { background: #323033; }
  .bubble { width: 9px; height: 10px; }

  .inspector { background: var(--panel); min-height: 0; overflow: hidden; }
  .object { display: flex; height: 18px; align-items: center; gap: 4px; padding: 0 2px; }
  .big-cube { flex: 0 0 8px; }
  .big-cube .ico { width: 8px; height: 8px; }
  .object-rows { flex: 1; display: flex; flex-direction: column; gap: 2px; }
  .object-row { display: flex; align-items: center; gap: 3px; height: 6px; }
  .static { display: flex; align-items: center; gap: 1px; width: 18px; color: #777; }
  .layer { color: #777; margin-left: 3px; }
  .pick { display: flex; align-items: center; background: #424043; height: 5px; min-width: 0; padding: 0 2px 0 1px; color: #c6c6c6; }
  .field { background: var(--field); height: 5px; line-height: 5px; padding: 0 1px; color: #b4b4b4; width: 100%; }
  input.grow { width: auto; }
  input[type='checkbox'] { appearance: none; flex: none; width: 4px; height: 4px; background: #1e1d1f; border: 0; }
  input[type='checkbox']:checked::before { content: '✓'; display: block; font: bold 4px/4px "DejaVu Sans", sans-serif; color: #ddd; }
  .comp-head { display: flex; align-items: center; height: 7px; gap: 2px; padding: 0 1px; background: #393739; border-top: 1px solid #1c1b1d; color: #d0d0d0; }
  .indent { margin-left: 6px; }
  .tools { width: 18px; height: 6px; }
  .props { padding: 1px 2px 0 6px; }
  .props.first { padding-bottom: 4px; }
  .prop { display: grid; grid-template-columns: 88px minmax(0, 1fr); align-items: center; height: 6px; }
  .name { color: #989898; white-space: nowrap; }
  .off { opacity: 0.5; }
  .axes { position: relative; display: grid; grid-template-columns: repeat(3, minmax(0, 1fr)); gap: 2px; }
  .axes label { display: flex; align-items: center; gap: 2px; }
  .link { position: absolute; left: -6px; top: 0; }
  .obj { display: flex; align-items: center; gap: 1px; white-space: nowrap; }
  .prefab { color: #52c7ef; }
  .prefab.text { color: #999; }
  .target { color: #777; }
  h3 { height: 9px; padding-top: 4px; font-weight: bold; color: #b6b6b6; }
  h3.last { height: 10px; }
  .slide { display: grid; grid-template-columns: minmax(0, 1fr) 15px; gap: 1px; align-items: center; }
  .gradient { height: 5px; background: linear-gradient(90deg, #4accc9, #4fd75a 30%, #b5d55a 55%, #ca742a 75%, #c82e34 88%, #cc3038); }
  .refresh { width: 100%; height: 16px; margin-top: 4px; justify-content: center; background: #454346; color: #b6b6b6; }
  .add { display: flex; justify-content: center; border-top: 1px solid #1c1b1d; margin-top: 3px; padding: 2px 0; }
  .add button { width: 71px; height: 7px; justify-content: center; background: #454346; color: #c8c8c8; }

  .status { flex: none; display: flex; align-items: center; height: 7px; gap: 2px; padding: 0 2px 0 1px; background: #121113; }
  .status-icons { width: 22px; height: 5px; }
  .taskbar { flex: none; display: flex; align-items: stretch; height: 12px; background: linear-gradient(90deg, #302d2d, #35322d 40%, #3a342f 75%, #302a28); color: #e8e8e8; }
  .start { width: 15px; justify-content: center; }
  .start svg { width: 6px; height: 6px; }
  .winsearch { display: flex; align-items: center; gap: 3px; width: 108px; padding-left: 4px; background: #3f3d3c; font-size: 5px; }
  .winsearch input { flex: 1; height: 7px; }
  .mascot { width: 25px; height: 11px; }
  .apps { display: flex; width: 203px; }
  .apps button { flex: 1; justify-content: center; border-bottom: 1px solid transparent; }
  .apps .open { border-color: #8294b5; }
  .apps .current { background: #5b5651; }
  .app-ico { width: 8px; height: 8px; }
  .tray { display: flex; align-items: center; gap: 3px; padding-right: 5px; }
  .cloud { width: 8px; height: 5px; }
  .tray-icons { width: 46px; height: 8px; }
  .clock { display: flex; flex-direction: column; align-items: center; width: 22px; }
  .note { width: 8px; height: 7px; }
</style>
